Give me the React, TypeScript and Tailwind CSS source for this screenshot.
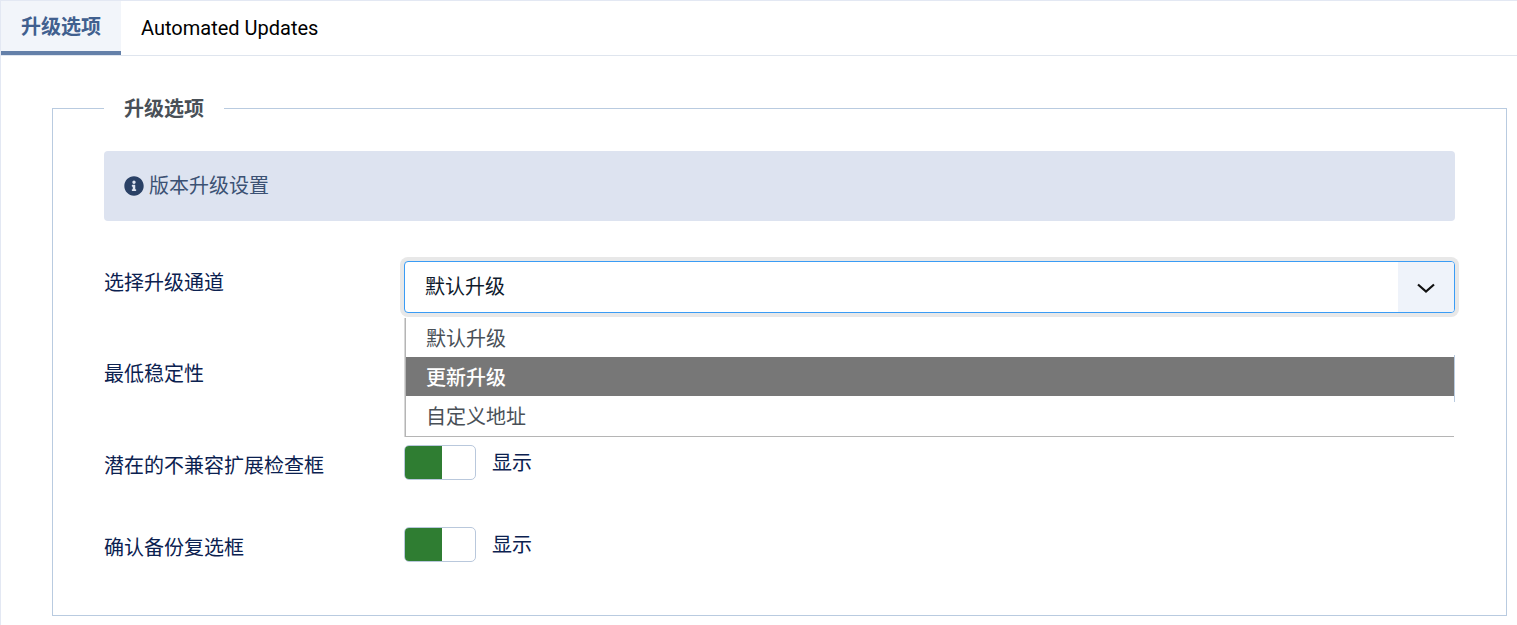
import React from "react";
import { FaInfoCircle } from "react-icons/fa";

const font = "font-['Roboto','Noto_Sans_CJK_SC',sans-serif]";

function Toggle() {
  return (
    <div className="flex items-center">
      <div className="flex h-[35px] w-[72px] overflow-hidden rounded-[5px] border border-[#b9c8dc] bg-white">
        <div className="h-full w-[37px] bg-[#2f7d32]" />
      </div>
      <span className="ml-4 text-[20px] leading-[30px] text-[#0b2150]">显示</span>
    </div>
  );
}

function Row({ label, children, cls, labelCls }: { label: string; children: React.ReactNode; cls: string; labelCls: string }) {
  return (
    <div className={`flex ${cls}`}>
      <label className={`w-[300px] shrink-0 text-[20px] leading-[30px] text-[#0b2150] ${labelCls}`}>{label}</label>
      <div className="relative min-w-0 flex-1">{children}</div>
    </div>
  );
}

export default function App() {
  return (
    <div className={`${font} h-[625px] overflow-hidden border-l border-t border-[#e3e8f3] bg-white`}>
      <div className="box-content flex h-[54px] border-b border-[#dfe5ee]">
        <div className="flex h-[54px] w-[120px] items-center justify-center border-b-4 border-[#6480a9] bg-[#f2f5fa] pt-[1px] text-[20px] font-bold text-[#41608f]">
          升级选项
        </div>
        <div className="flex h-[54px] items-center px-5 text-[20px] text-black">Automated Updates</div>
      </div>

      <fieldset className="ml-[51px] mr-[10px] mt-[38px] h-[522px] border border-[#b9cbe0] px-[51px]">
        <legend className="px-5 pt-[2px] text-[20px] font-bold leading-[27px] text-[#495057]">升级选项</legend>

        <div className="mt-[28px] flex h-[70px] items-center rounded-[4px] bg-[#dde3f0] px-5 text-[20px] text-[#3b5173]">
          <FaInfoCircle className="mr-[5px] h-5 w-5 text-[#2a4166]" />
          <span>版本升级设置</span>
        </div>

        <Row label="选择升级通道" cls="mt-[40px] h-[91px]" labelCls="pt-[7px]">
          <div className="absolute left-0 right-0 top-0 z-10">
            <div className="flex h-[52px] items-stretch overflow-hidden rounded-[4px] border border-[#3a9cf5] bg-white shadow-[0_0_0_4px_#e8e8e8]">
              <div className="flex flex-1 items-center px-5 text-[20px] text-[#0f1a2c]">默认升级</div>
              <div className="flex w-[56px] items-center justify-center bg-[#eff3fa]">
                <svg className="mt-[1px]" width="20" height="12" viewBox="0 0 20 12" fill="none" stroke="#111" strokeWidth="2.2">
                  <path d="M2 2.5l8 7 8-7" />
                </svg>
              </div>
            </div>
            <div className="relative z-10 ml-[1px] mr-[1px] mt-[5px] border-b border-l border-[#b5b5b5] bg-white text-[20px] leading-[43px] text-[#495057] shadow-[-1px_0_0_#d8d8d8]">
              <div className="h-[40px] pl-[20px]">默认升级</div>
              <div className="-mt-[1px] h-[39px] bg-[#777] pl-[20px] font-medium text-white">更新升级</div>
              <div className="h-[40px] pl-[20px]">自定义地址</div>
            </div>
          </div>
        </Row>

        <Row label="最低稳定性" cls="h-[93px]" labelCls="pt-[7px]">
          <div className="mt-[3px] h-[47px] border-r border-[#b9cbe0]" />
        </Row>

        <Row label="潜在的不兼容扩展检查框" cls="h-[82px]" labelCls="pt-[6px]">
          <Toggle />
        </Row>

        <Row label="确认备份复选框" cls="h-[60px]" labelCls="pt-[6px]">
          <Toggle />
        </Row>
      </fieldset>
    </div>
  );
}
